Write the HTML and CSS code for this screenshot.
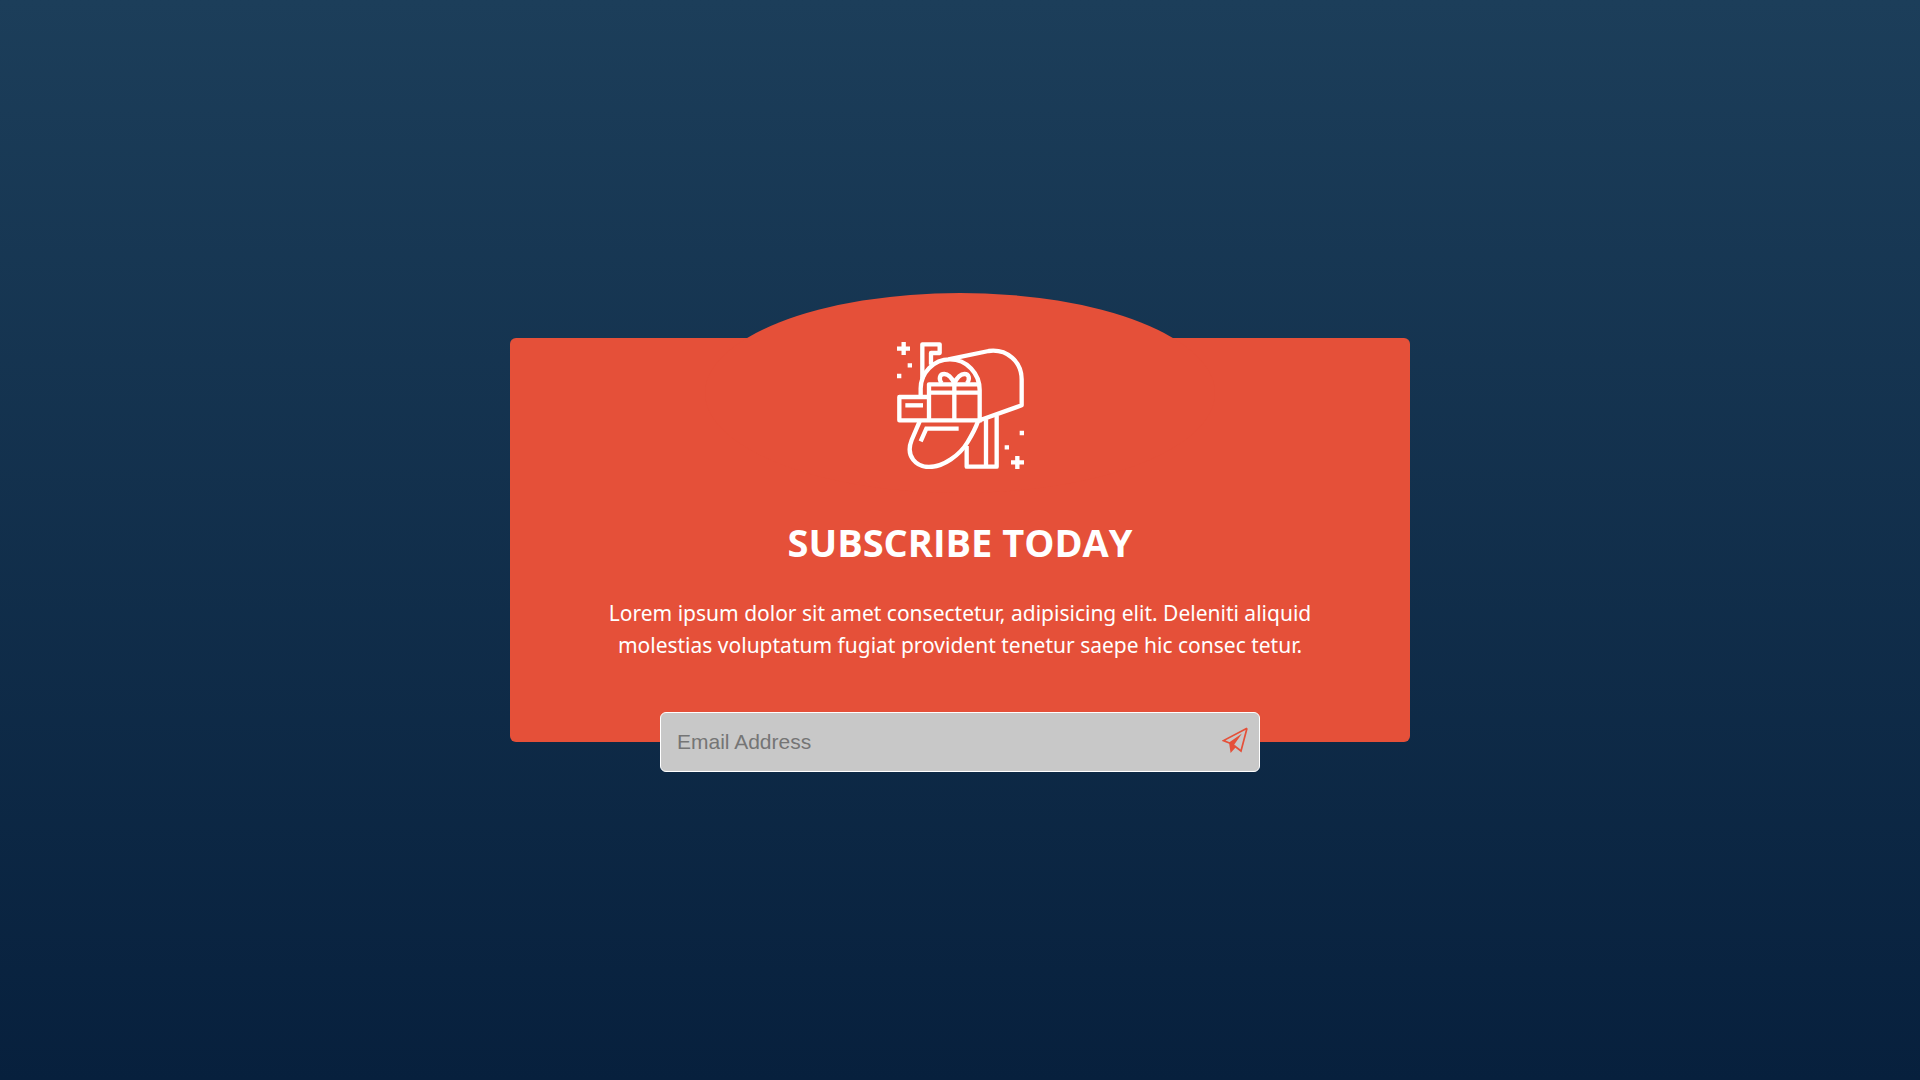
FILE: index.html
```html
<!DOCTYPE html>
<html lang="en">
<head>
<meta charset="utf-8">
<meta name="viewport" content="width=device-width, initial-scale=1">
<title>Subscribe Today</title>
<link rel="stylesheet" href="styles.css">
</head>
<body>
<main class="page">
  <section class="card">
    <svg class="card-icon" viewBox="33 33 384 384" fill="none" stroke="#fff" stroke-width="13" stroke-linejoin="round" aria-hidden="true">
      <!-- flag -->
      <path d="M112 146V43H164V69H138V104"/>
      <!-- mailbox -->
      <path d="M107 200V178A88 88 0 0 1 195 88C245 88 284 130 284 180V271L410 226V148C410 95 366 56 311 63L190 88"/>
      <!-- parcels -->
      <path d="M132 271V163H284M132 188H284M208 160V271M132 201H43V271H290"/>
      <path d="M61 226H114"/>
      <path d="M208 160C200 143 190 132 178 132C164 132 160 146 170 160M208 160C216 143 226 132 238 132C252 132 256 146 246 160"/>
      <!-- door -->
      <path d="M104 274L80 330C60 380 95 411 132 411C175 411 225 375 248 336Q270 300 279 274"/>
      <path d="M107 334L124 296H221" stroke-linejoin="miter"/>
      <!-- post -->
      <path d="M245 348V410H335V257M303 268V410"/>
      <!-- sparkles -->
      <path d="M36 56H75M56 36V75M378 397H417M397 378V417"/>
      <path d="M68 106H81M36 138H49M404 309H417M359 352H372"/>
    </svg>
    <h1 class="card-title">SUBSCRIBE TODAY</h1>
    <p class="card-text">Lorem ipsum dolor sit amet consectetur, adipisicing elit. Deleniti aliquid molestias voluptatum fugiat provident tenetur saepe hic consec tetur.</p>
    <form class="subscribe">
      <input class="subscribe-input" type="email" placeholder="Email Address" aria-label="Email Address">
      <button class="subscribe-button" type="submit" aria-label="Subscribe">
        <svg class="subscribe-icon" viewBox="0 0 26 26" aria-hidden="true">
          <path d="M25 1.2L1.5 13.6L8 16.2M25 1.2L19 24L12.6 19" fill="none" stroke="#e55039" stroke-width="1.7"/>
          <path d="M7 15.5L20 6.5L12.3 17.5L14 20L8.6 26Z" fill="#e55039"/>
        </svg>
      </button>
    </form>
  </section>
</main>
</body>
</html>
```
FILE: styles.css
```css
* {
  box-sizing: border-box;
}

body {
  margin: 0;
  font-family: "Noto Sans", "Open Sans", sans-serif;
  color: #fff;
}

.page {
  display: flex;
  align-items: center;
  justify-content: center;
  min-height: 100vh;
  padding: 48px 16px;
  background: linear-gradient(#1c3e5a, #07203d);
}

.card {
  position: relative;
  display: flex;
  flex-direction: column;
  align-items: center;
  width: 100%;
  max-width: 900px;
  padding: 3px 80px 0;
  border-radius: 6px;
  background: #e55039;
  text-align: center;
}

/* Domed top edge behind the icon */
.card::before {
  content: "";
  position: absolute;
  top: -45px;
  left: 50%;
  width: 510px;
  max-width: 100%;
  height: 200px;
  border-radius: 50%;
  background: #e55039;
  transform: translateX(-50%);
}

.card > * {
  position: relative;
}

.card-icon {
  width: 128px;
  height: 128px;
}

.card-title {
  margin: 47px 0 0;
  font-family: "Open Sans", "Noto Sans", sans-serif;
  font-size: 38px;
  line-height: 52px;
}

.card-text {
  margin: 29px 0 0;
  font-size: 21px;
  line-height: 32px;
}

.subscribe {
  width: 100%;
  max-width: 600px;
  margin: 51px 0 -30px;
}

.subscribe-input {
  display: block;
  width: 100%;
  height: 60px;
  padding: 0 60px 0 16px;
  border: 1px solid #fff;
  border-radius: 6px;
  background: #c8c8c8;
  color: #333;
  font: 21px "Liberation Sans", sans-serif;
}

.subscribe-input::placeholder {
  color: #757575;
}

.subscribe-button {
  position: absolute;
  top: 0;
  right: 0;
  display: flex;
  align-items: center;
  height: 100%;
  padding: 0 12px 4px;
  border: 0;
  background: none;
  cursor: pointer;
}

.subscribe-icon {
  width: 26px;
  height: 26px;
}
```
